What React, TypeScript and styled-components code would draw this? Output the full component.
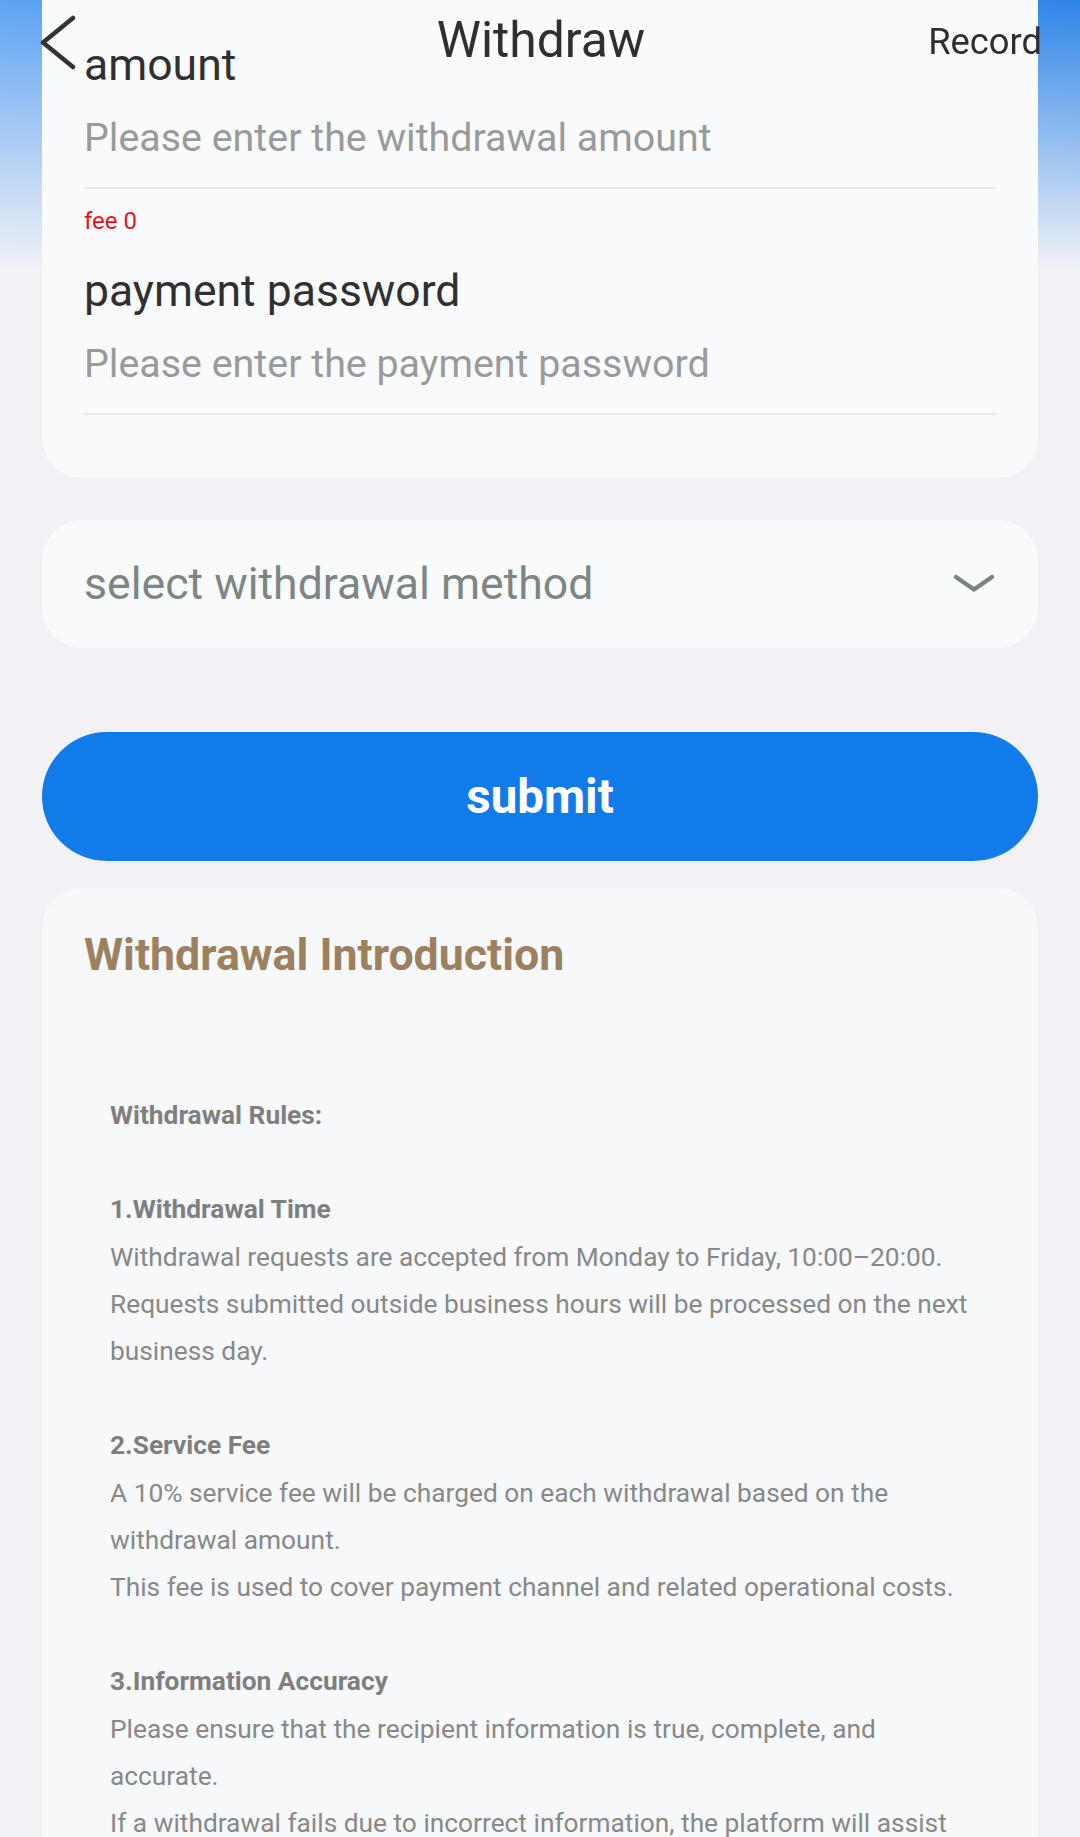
import React from "react";
import styled, { createGlobalStyle } from "styled-components";

const GlobalStyle = createGlobalStyle`
  html, body {
    margin: 0;
    padding: 0;
  }
  body {
    font-family: Roboto, "Noto Sans", "Liberation Sans", sans-serif;
    background:
      linear-gradient(180deg, rgba(242, 243, 247, 0) 0px, #f2f2f6 270px),
      linear-gradient(90deg, #5ea3f3 0%, #2d85e8 100%);
    background-repeat: no-repeat;
    background-color: #f2f2f6;
    min-height: 1837px;
  }
  * {
    box-sizing: border-box;
  }
`;

const Page = styled.div`
  position: relative;
  display: flex;
  flex-direction: column;
  padding: 0 42px;
`;

/* Navigation bar pinned over the scrolling content */
const NavBar = styled.header`
  position: fixed;
  top: 0;
  left: 0;
  right: 0;
  height: 82px;
  display: grid;
  grid-template-columns: 1fr auto 1fr;
  align-items: center;
  padding: 0 38px 0 40px;
  z-index: 10;
`;

const BackButton = styled.button`
  justify-self: start;
  display: flex;
  align-items: center;
  background: none;
  border: none;
  padding: 0;
  margin-top: 4px;
  cursor: pointer;
`;

const NavTitle = styled.h1`
  margin: 0;
  font-size: 49.8px;
  font-weight: 400;
  color: #2f2f2f;
  line-height: 1;
`;

const NavAction = styled.span`
  justify-self: end;
  font-size: 36.3px;
  color: #2f2f2f;
  line-height: 1;
  margin-top: 2px;
`;

const Card = styled.section<{ $tone?: string }>`
  background: ${(p) => p.$tone ?? "#f9fafc"};
  border-radius: 40px;
  padding: 0 42px;
`;

const FormCard = styled(Card)`
  border-radius: 0 0 40px 40px;
  padding-top: 35px;
  padding-bottom: 63px;
`;

const FieldLabel = styled.label<{ $gap?: number }>`
  display: block;
  font-size: 44.5px;
  line-height: 60px;
  color: #303030;
  margin-top: ${(p) => p.$gap ?? 0}px;
`;

const InputWrap = styled.div`
  border-bottom: 2px solid #e8e9ed;
  padding-bottom: 8px;
`;

const TextInput = styled.input`
  display: block;
  width: 100%;
  height: 84px;
  border: none;
  outline: none;
  background: transparent;
  padding: 0;
  font-family: inherit;
  font-size: 39.4px;
  color: #333;
  &::placeholder {
    color: #9a9a9a;
  }
`;

const FeeNote = styled.div`
  margin-top: 15px;
  font-size: 24px;
  line-height: 34px;
  color: #e5141f;
`;

const SelectCard = styled(Card)`
  margin-top: 42px;
  height: 128px;
  display: flex;
  align-items: center;
  justify-content: space-between;
  cursor: pointer;
`;

const SelectText = styled.span`
  font-size: 44.6px;
  color: #7d8683;
`;

const SubmitButton = styled.button`
  margin-top: 84px;
  height: 129px;
  width: 100%;
  border: none;
  border-radius: 65px;
  background: #127bea;
  color: #ffffff;
  font-family: inherit;
  font-size: 47.5px;
  font-weight: 700;
  cursor: pointer;
`;

const IntroCard = styled(Card)`
  margin-top: 27px;
  padding-top: 39px;
  padding-bottom: 60px;
  border-radius: 40px 40px 0 0;
`;

const IntroTitle = styled.h2`
  margin: 0;
  font-size: 44.7px;
  line-height: 56px;
  font-weight: 700;
  color: #9c8161;
`;

const RichText = styled.div`
  margin-top: 109px;
  padding: 0 26px;
  font-size: 26.3px;
  line-height: 47.2px;
  color: #888888;
`;

const RuleHeading = styled.div`
  font-weight: 700;
  color: #7f7f7f;
`;

const Spacer = styled.div`
  height: 47.2px;
`;

const Line = styled.div``;

function ChevronLeft() {
  return (
    <svg width="36" height="56" viewBox="0 0 36 56" fill="none">
      <polyline
        points="33,3 3,27.5 33,52"
        stroke="#333"
        strokeWidth="4.5"
        strokeLinecap="round"
        strokeLinejoin="round"
      />
    </svg>
  );
}

function ChevronDown() {
  return (
    <svg width="44" height="28" viewBox="0 0 44 28" fill="none">
      <polyline
        points="4,7 22,19.5 40,7"
        stroke="#7b8580"
        strokeWidth="4.5"
        strokeLinecap="round"
        strokeLinejoin="round"
      />
    </svg>
  );
}

const rules: { title: string; lines: string[] }[] = [
  {
    title: "1.Withdrawal Time",
    lines: [
      "Withdrawal requests are accepted from Monday to Friday, 10:00–20:00.",
      "Requests submitted outside business hours will be processed on the next business day.",
    ],
  },
  {
    title: "2.Service Fee",
    lines: [
      "A 10% service fee will be charged on each withdrawal based on the withdrawal amount.",
      "This fee is used to cover payment channel and related operational costs.",
    ],
  },
  {
    title: "3.Information Accuracy",
    lines: [
      "Please ensure that the recipient information is true, complete, and accurate.",
      "If a withdrawal fails due to incorrect information, the platform will assist you in checking it, but cannot be held responsible for any losses caused.",
    ],
  },
];

export default function App() {
  return (
    <>
      <GlobalStyle />
      <NavBar>
        <BackButton aria-label="back">
          <ChevronLeft />
        </BackButton>
        <NavTitle>Withdraw</NavTitle>
        <NavAction>Record</NavAction>
      </NavBar>
      <Page>
        <FormCard>
          <FieldLabel htmlFor="amount">amount</FieldLabel>
          <InputWrap>
            <TextInput
              id="amount"
              type="text"
              placeholder="Please enter the withdrawal amount"
            />
          </InputWrap>
          <FeeNote>fee 0</FeeNote>
          <FieldLabel htmlFor="paypwd" $gap={23}>
            payment password
          </FieldLabel>
          <InputWrap>
            <TextInput
              id="paypwd"
              type="password"
              placeholder="Please enter the payment password"
            />
          </InputWrap>
        </FormCard>

        <SelectCard>
          <SelectText>select withdrawal method</SelectText>
          <ChevronDown />
        </SelectCard>

        <SubmitButton type="button">submit</SubmitButton>

        <IntroCard $tone="#f7f8fa">
          <IntroTitle>Withdrawal Introduction</IntroTitle>
          <RichText>
            <RuleHeading>Withdrawal Rules:</RuleHeading>
            {rules.map((r) => (
              <React.Fragment key={r.title}>
                <Spacer />
                <RuleHeading>{r.title}</RuleHeading>
                {r.lines.map((l) => (
                  <Line key={l}>{l}</Line>
                ))}
              </React.Fragment>
            ))}
          </RichText>
        </IntroCard>
      </Page>
    </>
  );
}
